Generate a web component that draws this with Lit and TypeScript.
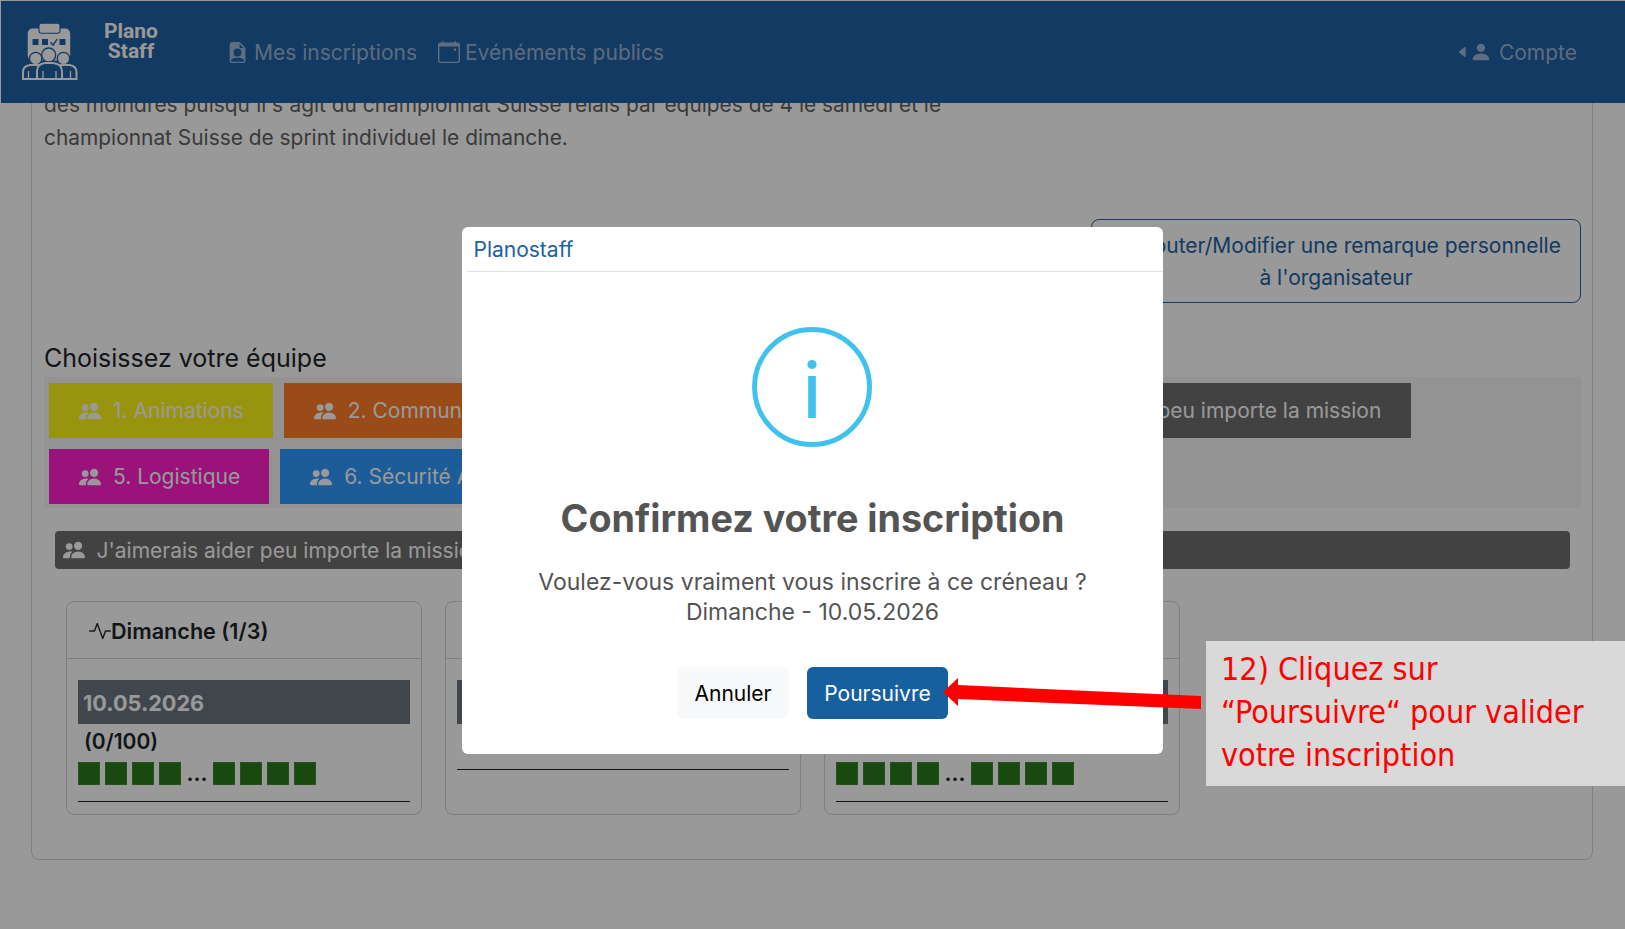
import { LitElement, html, css, svg } from "lit";
import { customElement } from "lit/decorators.js";

const PEOPLE = "M7 14s-1 0-1-1 1-4 5-4 5 3 5 4-1 1-1 1H7Zm4-6a3 3 0 1 0 0-6 3 3 0 0 0 0 6Zm-5.784 6A2.238 2.238 0 0 1 5 13c0-1.355.68-2.75 1.936-3.72A6.325 6.325 0 0 0 5 9c-4 0-5 3-5 4s1 1 1 1h4.216ZM4.5 8a2.5 2.5 0 1 0 0-5 2.5 2.5 0 0 0 0 5Z";
const ACTIVITY = "M6 2a.5.5 0 0 1 .47.33L10 12.036l1.53-4.208A.5.5 0 0 1 12 7.5h3.5a.5.5 0 0 1 0 1h-3.15l-1.88 5.17a.5.5 0 0 1-.94 0L6 3.964 4.47 8.171A.5.5 0 0 1 4 8.5H.5a.5.5 0 0 1 0-1h3.15l1.88-5.17A.5.5 0 0 1 6 2Z";
const FILE_PERSON = "M9.293 0H4a2 2 0 0 0-2 2v12a2 2 0 0 0 2 2h8a2 2 0 0 0 2-2V4.707A1 1 0 0 0 13.707 4L10 .293A1 1 0 0 0 9.293 0zM9.5 3.5v-2l3 3h-2a1 1 0 0 1-1-1zM11 8a3 3 0 1 1-6 0 3 3 0 0 1 6 0zm2 5.755V14a1 1 0 0 1-1 1H4a1 1 0 0 1-1-1v-.245S4 12 8 12s5 1.755 5 1.755z";
const CALENDAR = "M3.5 0a.5.5 0 0 1 .5.5V1h8V.5a.5.5 0 0 1 1 0V1h1a2 2 0 0 1 2 2v11a2 2 0 0 1-2 2H2a2 2 0 0 1-2-2V3a2 2 0 0 1 2-2h1V.5a.5.5 0 0 1 .5-.5zM1 4v10a1 1 0 0 0 1 1h12a1 1 0 0 0 1-1V4H1z";
const PERSON = "M3 14s-1 0-1-1 1-4 6-4 6 3 6 4-1 1-1 1H3Zm5-6a3 3 0 1 0 0-6 3 3 0 0 0 0 6Z";
const CARET = "m3.86 8.753 5.482 4.796c.646.566 1.658.106 1.658-.753V3.204a1 1 0 0 0-1.659-.753l-5.48 4.796a1 1 0 0 0 0 1.506z";
const PENCIL = "M12.854.146a.5.5 0 0 0-.707 0L10.5 1.793 14.207 5.5l1.647-1.646a.5.5 0 0 0 0-.708l-3-3zm.646 6.061L9.793 2.5 3.293 9H3.5a.5.5 0 0 1 .5.5v.5h.5a.5.5 0 0 1 .5.5v.5h.5a.5.5 0 0 1 .5.5v.5h.5a.5.5 0 0 1 .5.5v.207l6.5-6.5z";

const icon = (d: string, cls: string) =>
  html`<svg class=${cls} viewBox="0 0 16 16" fill="currentColor"><path d=${d}></path></svg>`;

const NAVY = "#2161a3";
const LOGO = svg`
  <rect x="12.7" y="13.5" width="42.5" height="32" rx="5" fill="#fff"></rect>
  <rect x="24" y="8.3" width="21" height="10" rx="2.5" fill="#fff" stroke=${NAVY} stroke-width="1.1"></rect>
  <rect x="17.5" y="24" width="6" height="6" fill=${NAVY}></rect>
  <rect x="27" y="24" width="6" height="6" fill=${NAVY}></rect>
  <rect x="44.5" y="24" width="6" height="6" fill=${NAVY}></rect>
  <path d="M35.5 27.3l2.6 2.8 4-6" fill="none" stroke=${NAVY} stroke-width="1.4"></path>
  <circle cx="20.7" cy="43.5" r="6.2" fill="#fff" stroke=${NAVY} stroke-width="1.3"></circle>
  <circle cx="48.5" cy="43.5" r="6.2" fill="#fff" stroke=${NAVY} stroke-width="1.3"></circle>
  <circle cx="33.7" cy="40" r="7" fill="#fff" stroke=${NAVY} stroke-width="1.3"></circle>
  <g fill=${NAVY} stroke="#fff" stroke-width="2">
    <path d="M8 64V57Q8 51 15 50H22Q30 50 30 57V64Z"></path>
    <path d="M61.5 64V57Q61.5 51 54.5 50H47Q39 50 39 57V64Z"></path>
    <path d="M22 64V56Q22 49 30 48H38Q47 49 47 56V64Z"></path>
  </g>
  <path d="M13.5 56V64M28 56V64M41 56V64M55.5 56V64" fill="none" stroke="#fff" stroke-width="1.3"></path>
`;

@customElement("app-root")
export class AppRoot extends LitElement {
  static styles = css`
    :host {
      display: block;
      position: relative;
      width: 1625px;
      height: 929px;
      overflow: hidden;
      background: #fff;
      font-family: Inter, "Liberation Sans", sans-serif;
      font-size: 21px;
      color: #212529;
      box-sizing: border-box;
    }
    * { box-sizing: border-box; }

    /* page behind the dialog */
    .main { padding: 60px 32px 0 31px; }
    .panel {
      border: 1px solid #d4d4d4;
      border-radius: 8px;
      padding: 27px 11px 44px 12px;
    }
    .intro {
      margin: 0;
      width: 910px;
      font-size: 20.9px;
      line-height: 33px;
      color: #5f5f5f;
    }
    .remark-row { display: flex; justify-content: flex-end; margin-top: 65px; }
    .remark {
      width: 490px;
      height: 84px;
      border: 1px solid #2161a3;
      border-radius: 8px;
      color: #2161a3;
      text-align: center;
      line-height: 32px;
      padding-top: 2px;
      display: flex;
      align-items: center;
      justify-content: center;
    }
    .ic-pencil { width: 19px; height: 19px; margin-right: 4px; vertical-align: -3px; }
    .section-title { margin: 40px 0 4px; font-size: 25px; font-weight: 400; line-height: 30px; color: #212529; }
    .band {
      background: #f5f5f5;
      padding: 6px 5px 4px;
      display: flex;
      flex-wrap: wrap;
      gap: 11px;
    }
    .team {
      height: 55px;
      padding: 0 29px 0 30px;
      display: flex;
      align-items: center;
      gap: 12px;
      color: #fff;
      white-space: nowrap;
      overflow: hidden;
    }
    .ic-people { width: 22px; height: 22px; flex: none; }
    .yellow { background: #fff717; }
    .orange { background: #ff7f28; }
    .green { background: #2f8f4a; width: 190px; }
    .teal { background: #20a0a0; width: 150px; }
    .grey { background: #6e6e6e; padding-right: 30px; }
    .magenta { background: #ff21cb; }
    .blue { background: #2d99ff; }
    .any {
      margin: 23px 11px 0 10.5px;
      height: 38px;
      background: #6e6e6e;
      border-radius: 4px;
      color: #fff;
      display: flex;
      align-items: center;
      gap: 12px;
      padding-left: 8px;
    }
    .cards { display: flex; gap: 23px; margin: 32px 0 0 22px; }
    .card {
      width: 356px;
      height: 214px;
      border: 1px solid #d4d4d4;
      border-radius: 8px;
      flex: none;
    }
    .card-head {
      height: 57px;
      border-bottom: 1px solid #d4d4d4;
      padding: 2px 22px 0;
      display: flex;
      align-items: center;
      font-size: 21.6px;
      font-weight: 600;
      color: #212529;
    }
    .ic-activity { width: 22px; height: 22px; flex: none; }
    .card-body { padding: 21px 11px 0; }
    .date {
      height: 44px;
      background: #6c757d;
      color: #fff;
      font-size: 21.7px;
      font-weight: 700;
      padding: 1px 0 0 5px;
      display: flex;
      align-items: center;
    }
    .count { height: 32px; padding: 3px 0 0 6px; display: flex; align-items: center; font-weight: 600; }
    .slots { display: flex; align-items: flex-end; gap: 5px; margin-top: 6px; margin-bottom: 16px; }
    .slot { width: 22px; height: 23px; background: #2b7b1b; border: 1px solid #3a8a2a; }
    .dots { width: 22px; height: 23px; font-weight: 700; line-height: 23px; text-align: center; }
    .rule { height: 1px; background: #212529; margin-top: 13px; }

    /* top bar */
    .nav {
      position: absolute;
      top: 1px;
      left: 1px;
      right: 0;
      height: 102px;
      background: #2161a3;
      display: flex;
      align-items: center;
      color: rgba(255, 255, 255, 0.55);
      padding-right: 48px;
    }
    .logo { width: 75px; height: 75px; margin-left: 14px; flex: none; }
    .brand {
      width: 72px;
      margin-left: 5px;
      align-self: flex-start;
      margin-top: 21px;
      font-family: Roboto, sans-serif;
      font-weight: 700;
      font-size: 21px;
      line-height: 19.5px;
      text-align: center;
      color: #fff;
    }
    .links { display: flex; align-items: center; margin-left: 60px; }
    .link { display: flex; align-items: center; white-space: nowrap; }
    .ic-file { width: 21px; height: 21px; margin-right: 6px; }
    .ic-cal { width: 22px; height: 22px; margin: 0 5px 0 21px; }
    .account { margin-left: auto; display: flex; align-items: center; }
    .ic-caret { width: 14px; height: 14px; margin-right: -0.5px; }
    .ic-person { width: 22px; height: 22px; margin: 0 7px 0 0; }

    /* dim layer */
    .backdrop { position: absolute; inset: 0; background: rgba(0, 0, 0, 0.4); }

    /* dialog */
    .modal {
      position: absolute;
      left: 462px;
      top: 227px;
      width: 701px;
      height: 527px;
      background: #fff;
      border-radius: 6px;
      text-align: center;
      color: #545454;
    }
    .modal-head {
      margin-left: 5px;
      height: 45px;
      padding-left: 6.5px;
      border-bottom: 1px solid #dee2e6;
      color: #1a62a3;
      display: flex;
      align-items: center;
      text-align: left;
    }
    .info { display: block; width: 120px; height: 120px; margin: 55px 0 0 290px; }
    .modal h2 { margin: 48px 0 0; font-size: 37.7px; line-height: 47px; font-weight: 700; color: #545454; }
    .modal p { margin: 25px 0 0; font-size: 23px; line-height: 30px; color: #545454; }
    .actions { display: flex; justify-content: center; gap: 18px; margin-top: 40px; }
    .btn {
      height: 52px;
      border-radius: 6px;
      display: flex;
      align-items: center;
      justify-content: center;
    }
    .cancel { width: 112px; background: #f8f9fa; color: #000; }
    .go { width: 141px; background: #17609f; color: #fff; }

    /* tutorial annotation */
    .callout {
      position: absolute;
      left: 1206px;
      top: 641px;
      right: 0;
      height: 145px;
      background: #d9d9d9;
      color: #f00;
      font-family: "DejaVu Sans", sans-serif;
      font-stretch: condensed;
      font-size: 32px;
      line-height: 43px;
      padding: 7px 0 0 15px;
      white-space: nowrap;
    }
    .arrow { position: absolute; left: 0; top: 0; width: 1625px; height: 929px; pointer-events: none; }
  `;

  private slots() {
    const s = (n: number) => Array.from({ length: n }, () => html`<div class="slot"></div>`);
    return html`<div class="slots">${s(4)}<div class="dots">...</div>${s(4)}</div>`;
  }

  private team(label: string, cls: string) {
    return html`<div class="team ${cls}">${icon(PEOPLE, "ic-people")}<span>${label}</span></div>`;
  }

  render() {
    return html`
      <div class="main">
        <div class="panel">
          <p class="intro">des moindres puisqu'il s'agit du championnat Suisse relais par équipes de 4 le samedi et le championnat Suisse de sprint individuel le dimanche.</p>
          <div class="remark-row">
            <div class="remark"><span>${icon(PENCIL, "ic-pencil")}Ajouter/Modifier une remarque personnelle<br />à l'organisateur</span></div>
          </div>
          <h3 class="section-title">Choisissez votre équipe</h3>
          <div class="band">
            ${this.team("1. Animations", "yellow")}
            ${this.team("2. Communication", "orange")}
            <div class="team green"></div>
            <div class="team teal"></div>
            ${this.team("J'aimerais aider peu importe la mission", "grey")}
            ${this.team("5. Logistique", "magenta")}
            ${this.team("6. Sécurité Accueil", "blue")}
          </div>
          <div class="any">${icon(PEOPLE, "ic-people")}<span>J'aimerais aider peu importe la mission</span></div>
          <div class="cards">
            <div class="card">
              <div class="card-head">${icon(ACTIVITY, "ic-activity")}<span>Dimanche (1/3)</span></div>
              <div class="card-body">
                <div class="date">10.05.2026</div>
                <div class="count">(0/100)</div>
                ${this.slots()}
                <div class="rule"></div>
              </div>
            </div>
            <div class="card">
              <div class="card-head"></div>
              <div class="card-body">
                <div class="date"></div>
                <div class="count"></div>
                <div class="rule"></div>
              </div>
            </div>
            <div class="card">
              <div class="card-head"></div>
              <div class="card-body">
                <div class="date"></div>
                <div class="count"></div>
                ${this.slots()}
                <div class="rule"></div>
              </div>
            </div>
          </div>
        </div>
      </div>

      <div class="nav">
        <svg class="logo" viewBox="0 0 75 75">${LOGO}</svg>
        <div class="brand">Plano<br />Staff</div>
        <div class="links">
          <div class="link">${icon(FILE_PERSON, "ic-file")}<span>Mes inscriptions</span></div>
          <div class="link">
            <svg class="ic-cal" viewBox="0 0 16 16" fill="currentColor"><path d=${CALENDAR}></path><rect x="11.5" y="5.5" width="1.6" height="1.6"></rect></svg>
            <span>Evénéments publics</span>
          </div>
        </div>
        <div class="account">${icon(CARET, "ic-caret")}${icon(PERSON, "ic-person")}<span>Compte</span></div>
      </div>

      <div class="backdrop"></div>

      <div class="modal">
        <div class="modal-head">Planostaff</div>
        <svg class="info" viewBox="0 0 120 120">
          <circle cx="60" cy="60" r="57.5" fill="none" stroke="#3fc3ee" stroke-width="5"></circle>
          <circle cx="60" cy="37.5" r="4.6" fill="#3fc3ee"></circle>
          <rect x="56.2" y="49" width="7.6" height="42" fill="#3fc3ee"></rect>
        </svg>
        <h2>Confirmez votre inscription</h2>
        <p>Voulez-vous vraiment vous inscrire à ce créneau ?<br />Dimanche - 10.05.2026</p>
        <div class="actions">
          <div class="btn cancel">Annuler</div>
          <div class="btn go">Poursuivre</div>
        </div>
      </div>

      <svg class="arrow" viewBox="0 0 1625 929">
        <polygon points="943,692 958,678 958,685 1201,696 1201,709 958,699 958,706" fill="#f00"></polygon>
      </svg>
      <div class="callout">12) Cliquez sur<br />“Poursuivre“ pour valider<br />votre inscription</div>
    `;
  }
}
